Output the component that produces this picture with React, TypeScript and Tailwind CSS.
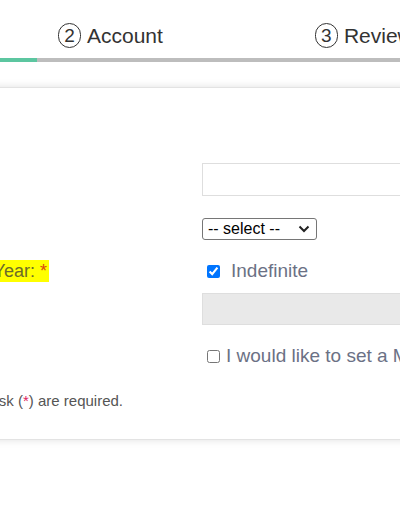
import React from 'react';

const StepBadge = ({ n }: { n: number }) => (
    <span className="inline-flex items-center justify-center w-[23px] h-[25px] rounded-full border-[1.5px] border-[#333] text-[19px] leading-none text-[#333]">
        {n}
    </span>
);

const App = () => {
    return (
        <div className="w-[400px] h-[516px] overflow-hidden bg-white text-[#333]" style={{ fontFamily: '"Liberation Sans", Arial, sans-serif' }}>
            {/* Steps */}
            <div className="h-[58px] flex items-end pb-[7px] text-[21px] whitespace-nowrap">
                <div className="flex items-center gap-[6px] ml-[58px]">
                    <StepBadge n={2} />
                    <span>Account</span>
                </div>
                <div className="flex items-center gap-[6px] ml-[152px]">
                    <StepBadge n={3} />
                    <span>Review</span>
                </div>
            </div>

            {/* Progress */}
            <div className="h-[4px] flex bg-[#bdbdbd]">
                <div className="w-[37px] bg-[#5cc6a0]"></div>
            </div>

            {/* Card */}
            <div className="mt-[25px] -mx-4 h-[353px] bg-white border border-[#e3e3e3] shadow-[0_0_8px_rgba(0,0,0,0.12)] pl-4 pt-[75px]">
                <div className="flex">
                    <div className="w-[201px] shrink-0"></div>
                    <div className="flex-1 h-[33px] border border-[#dedede] bg-white"></div>
                </div>

                <div className="flex mt-[22px]">
                    <div className="w-[201px] shrink-0"></div>
                    <div className="w-[115px] h-[22px] border border-[#767676] rounded-[3px] flex items-center justify-between pl-[5px] pr-[6px] text-[16px] text-black">
                        <span>-- select --</span>
                        <svg width="12" height="8" viewBox="0 0 12 8" fill="none" stroke="#222" strokeWidth="2">
                            <path d="M1.5 1.5 L6 6 L10.5 1.5" />
                        </svg>
                    </div>
                </div>

                <div className="flex mt-[20px] h-[22px] items-center">
                    <div className="w-[201px] shrink-0 flex whitespace-nowrap">
                        <div className="w-[48px] shrink-0 flex justify-end">
                            <span className="shrink-0 bg-[#ffff00] text-[18px] leading-[22px] text-[#6b6b2a] pr-[2px]">
                                Expiration Year: <span className="text-[#d9480f]">*</span>
                            </span>
                        </div>
                    </div>
                    <div className="flex items-center">
                        <input type="checkbox" defaultChecked readOnly className="m-0 w-[13px] h-[13px] ml-[5px] accent-[#0075ff]" />
                        <span className="ml-[11px] text-[19px] leading-[22px] text-[#6b7185]">Indefinite</span>
                    </div>
                </div>

                <div className="flex mt-[11px]">
                    <div className="w-[201px] shrink-0"></div>
                    <div className="flex-1 h-[32px] border border-[#dedede] bg-[#e9e9e9]"></div>
                </div>

                <div className="flex mt-[20px] h-[22px] items-center">
                    <div className="w-[201px] shrink-0"></div>
                    <input type="checkbox" className="m-0 w-[13px] h-[13px] ml-[5px] shrink-0" />
                    <span className="ml-[6px] text-[19px] leading-[22px] text-[#6b7185] whitespace-nowrap">I would like to set a Maximum</span>
                </div>

                <div className="flex mt-[26px] h-[16px] items-center">
                    <div className="w-[122px] shrink-0 flex justify-end whitespace-nowrap">
                        <span className="shrink-0 text-[15px] leading-[16px] text-[#555]">
                            Fields marked with an asterisk (<span className="text-[#e0245e]">*</span>) are required.
                        </span>
                    </div>
                </div>
            </div>
        </div>
    );
};

export default App;
